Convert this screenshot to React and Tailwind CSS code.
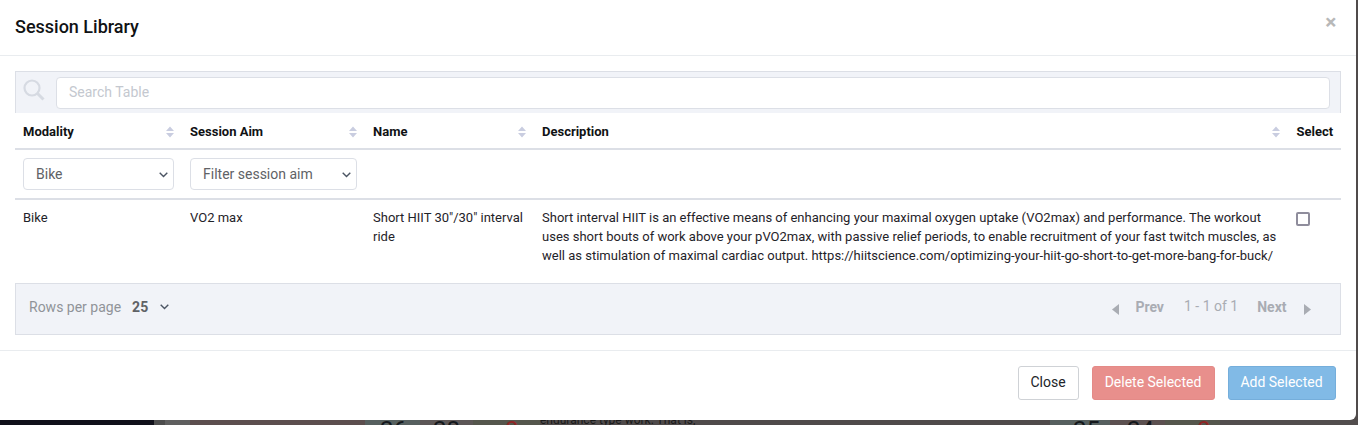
import React from "react";

function Sort() {
  return (
    <svg width="10" height="12" viewBox="0 0 10 12" className="block">
      <path d="M5 0.5 L9 5 H1 Z M1 7 H9 L5 11.5 Z" fill="#c9cde0" />
    </svg>
  );
}

function Chevron({ className = "" }) {
  return (
    <svg width="9" height="6" viewBox="0 0 9 6" fill="none" stroke="#4b5563" strokeWidth="1.4" className={className}>
      <path d="M0.7 0.8 L4.5 4.6 L8.3 0.8" />
    </svg>
  );
}

function Th({ label, sort = true, pr = "pr-[7px]" }) {
  return (
    <th className={`border-b-2 border-[#dcdfe6] pl-2 ${pr} h-[36px] pt-[2px] text-left align-middle font-bold text-[13px] text-[#101214]`}>
      <div className="flex items-center justify-between">
        <span>{label}</span>
        {sort && <Sort />}
      </div>
    </th>
  );
}

function FilterSelect({ text, width }) {
  return (
    <div className={`flex h-[32px] ${width} items-center justify-between rounded-[4px] border border-[#dcdfe6] bg-white pl-3 pr-[5px] text-[14px] text-[#606266]`}>
      <span>{text}</span>
      <Chevron className="mt-[1px]" />
    </div>
  );
}

export default function App() {
  return (
    <div className="relative h-[425px] w-[1358px] overflow-hidden bg-[#504b4b] font-['Roboto',sans-serif]">
      {/* dimmed page behind the modal */}
      <div className="absolute bottom-0 left-0 flex h-[5px] w-full">
        <div className="w-[154px] bg-[#10101a]" />
        <div className="w-[11px] bg-[#4d4d4d]" />
        <div className="w-[25px] bg-[#5f5f5f]" />
        <div className="w-[175px] bg-[#5c4e4e]" />
        <div className="w-[55px] bg-[#56605f]" />
        <div className="w-[53px] bg-[#5c5656]" />
        <div className="w-[67px] bg-[#55564c]" />
        <div className="w-[510px] bg-[#4f4a4a]" />
        <div className="w-[60px] bg-[#56605f]" />
        <div className="w-[55px] bg-[#5c5050]" />
        <div className="w-[55px] bg-[#55564c]" />
        <div className="flex-1 bg-[#524d4d]" />
      </div>
      <div className="absolute left-[540px] top-[412px] text-[12px] leading-[16px] text-[#1a1a1a]">endurance type work. That is,</div>
      <div className="absolute left-[380px] top-[416px] text-[24px] leading-[28px] text-[#14181c]">26</div>
      <div className="absolute left-[433px] top-[416px] text-[24px] leading-[28px] text-[#14181c]">28</div>
      <div className="absolute left-[505px] top-[416px] text-[24px] leading-[28px] text-[#8f2626]">0</div>
      <div className="absolute left-[1073px] top-[416px] text-[24px] leading-[28px] text-[#14181c]">25</div>
      <div className="absolute left-[1127px] top-[416px] text-[24px] leading-[28px] text-[#14181c]">24</div>
      <div className="absolute left-[1197px] top-[416px] text-[24px] leading-[28px] text-[#8f2626]">0</div>

      <div className="relative ml-[-1px] h-[420px] w-[1356.5px] rounded-br-[6px] bg-white">
        {/* header */}
        <div className="flex h-[56px] items-center justify-between border-b border-[#e9ecef] pb-[2px] pl-[16px] pr-[19px]">
          <h5 className="text-[18px] font-medium text-[#101214]">Session Library</h5>
          <span className="mb-[9px] text-[21px] font-bold leading-none text-[#b8b8b8]">×</span>
        </div>

        {/* body */}
        <div className="pl-[16px] pr-[15px] pt-[15px]">
          <div className="flex h-[42px] items-start border border-b-0 border-[#dcdfe6] bg-[#f1f3f8] pl-[8px] pr-[10px] pt-[5px]">
            <svg width="22" height="22" viewBox="0 0 22 22" fill="none" className="ml-[-1px] mr-[11px] mt-[2px] shrink-0">
              <circle cx="9" cy="9" r="7.5" stroke="#d6dae2" strokeWidth="2.2" />
              <path d="M14.5 14.5 L20.5 20.5" stroke="#d6dae2" strokeWidth="3" />
            </svg>
            <div className="flex h-[32px] flex-1 items-center rounded-[4px] border border-[#dcdfe6] bg-white pb-[2px] pl-3 text-[14px] text-[#c4c8cf]">
              Search Table
            </div>
          </div>

          <table className="w-full table-fixed border-collapse">
            <colgroup>
              <col className="w-[167px]" />
              <col className="w-[183px]" />
              <col className="w-[169px]" />
              <col />
              <col className="w-[52px]" />
            </colgroup>
            <thead>
              <tr>
                <Th label="Modality" />
                <Th label="Session Aim" />
                <Th label="Name" />
                <Th label="Description" pr="pr-[8px]" />
                <Th label="Select" sort={false} pr="pr-0" />
              </tr>
              <tr>
                <th className="h-[50px] border-b-2 border-[#dcdfe6] pl-2 pr-2 align-middle font-normal"><FilterSelect text="Bike" width="w-[151px]" /></th>
                <th className="border-b-2 border-[#dcdfe6] pl-2 pr-2 align-middle font-normal"><FilterSelect text="Filter session aim" width="w-[167px]" /></th>
                <th className="border-b-2 border-[#dcdfe6]" />
                <th className="border-b-2 border-[#dcdfe6]" />
                <th className="border-b-2 border-[#dcdfe6]" />
              </tr>
            </thead>
            <tbody>
              <tr className="align-top text-[13px] leading-[19px] text-[#1f2329]">
                <td className="h-[84px] pl-2 pt-[8px]">Bike</td>
                <td className="pl-2 pt-[8px]">VO2 max</td>
                <td className="pl-2 pr-2 pt-[8px]">Short HIIT 30"/30" interval ride</td>
                <td className="pl-2 pr-[5px] pt-[8px]">
                  Short interval HIIT is an effective means of enhancing your maximal oxygen uptake (VO2max) and performance. The workout uses short bouts of work above your pVO2max, with passive relief periods, to enable recruitment of your fast twitch muscles, as well as stimulation of maximal cardiac output. https://hiitscience.com/optimizing-your-hiit-go-short-to-get-more-bang-for-buck/
                </td>
                <td className="pl-[7px] pt-[12px]">
                  <input type="checkbox" readOnly className="block h-[14px] w-[14px] appearance-none rounded-[2px] border-2 border-[#8f8d9c] bg-white" />
                </td>
              </tr>
            </tbody>
          </table>

          <div className="flex h-[52px] items-center justify-between border border-[#dcdfe6] bg-[#f1f3f8] pb-[4px] pl-[13px] pr-[29px] text-[14px]">
            <div className="flex items-center">
              <span className="text-[#909399]">Rows per page</span>
              <span className="ml-[11px] font-bold text-[#606266]">25</span>
              <Chevron className="ml-[12px]" />
            </div>
            <div className="flex items-center text-[#a9acb3]">
              <svg width="7" height="11" viewBox="0 0 7 11" className="mt-[4px]"><path d="M7 0 V11 L0 5.5 Z" fill="#a9acb3" /></svg>
              <span className="ml-[16px] font-bold">Prev</span>
              <span className="mb-[2px] ml-[20px]">1 - 1 of 1</span>
              <span className="ml-[19px] font-bold">Next</span>
              <svg width="7" height="11" viewBox="0 0 7 11" className="ml-[17px] mt-[4px]"><path d="M0 0 V11 L7 5.5 Z" fill="#a9acb3" /></svg>
            </div>
          </div>
        </div>

        {/* footer */}
        <div className="mt-[15px] flex h-[70px] items-start justify-end gap-[13px] border-t border-[#e9ecef] pr-[20px] pt-[15px] text-[14px]">
          <button className="h-[34px] w-[61px] rounded-[3px] border border-[#cfd2d6] bg-white pb-[2px] text-[#212529]">Close</button>
          <button className="h-[34px] w-[123px] rounded-[3px] border border-[#e48a87] bg-[#e88f8c] pb-[2px] text-white">Delete Selected</button>
          <button className="h-[34px] w-[108px] rounded-[3px] border border-[#75aedb] bg-[#81bae6] pb-[2px] text-white">Add Selected</button>
        </div>
      </div>
    </div>
  );
}
